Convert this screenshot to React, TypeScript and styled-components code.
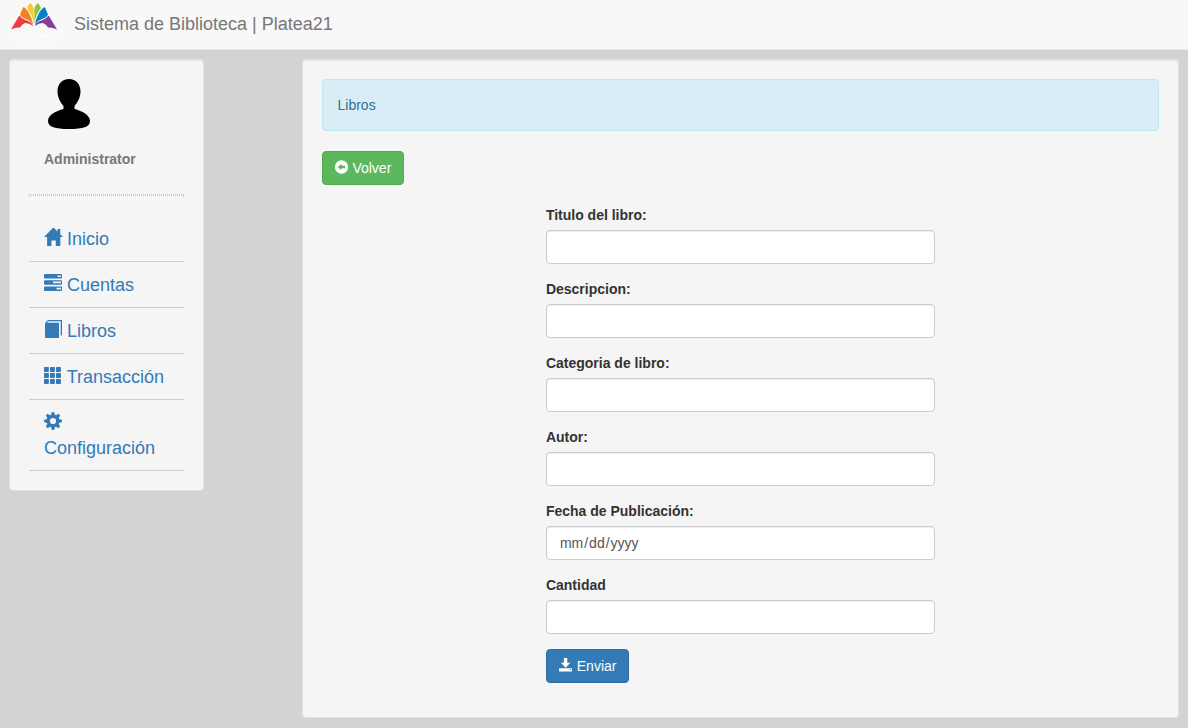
import React from "react";
import styled, { createGlobalStyle } from "styled-components";

const GlobalStyle = createGlobalStyle`
  *, *::before, *::after { box-sizing: border-box; }
  body {
    margin: 0;
    background: #d3d3d3;
    color: #333;
    font-family: "Liberation Sans", Arial, Helvetica, sans-serif;
    font-size: 14px;
    line-height: 20px;
  }
`;

const Navbar = styled.header`
  display: flex;
  align-items: flex-start;
  min-height: 50px;
  padding: 0 10px;
  background: #f8f8f8;
  border-bottom: 1px solid #e7e7e7;
`;

const Brand = styled.a`
  display: flex;
  align-items: center;
  gap: 16px;
  color: #777;
  font-size: 18px;
  text-decoration: none;
`;

const Logo = styled.svg`
  display: block;
  width: 48px;
  height: 48px;
`;

const Layout = styled.div`
  display: grid;
  grid-template-columns: minmax(0, 2fr) minmax(0, 9fr);
  column-gap: calc(100% / 12);
  align-items: start;
  padding: 9px 9px 10px;
`;

const Well = styled.div`
  padding: 19px;
  background: #f5f5f5;
  border: 1px solid #e3e3e3;
  border-radius: 4px;
  box-shadow: inset 0 1px 1px rgba(0, 0, 0, 0.05);
`;

const MainWell = styled(Well)`
  padding-bottom: 34px;
`;

const Profile = styled.div`
  padding: 0 15px;
  color: #777;
  font-weight: 700;
`;

const Avatar = styled.svg`
  display: block;
  width: 50px;
  height: 50px;
  margin-bottom: 20px;
`;

const Divider = styled.hr`
  height: 2px;
  margin: 25px 0 20px;
  border: 1px dotted #ccc;
`;

const Menu = styled.ul`
  margin: 0;
  padding: 0;
  list-style: none;
`;

const MenuItem = styled.li`
  border-bottom: 1px solid #ccc;
`;

const MenuLink = styled.a`
  display: block;
  padding: 11px 15px 9px;
  color: #337ab7;
  font-size: 18px;
  line-height: 25px;
  text-decoration: none;
`;

const Icon = styled.svg<{ $size: number }>`
  width: ${(p) => p.$size}px;
  height: ${(p) => p.$size}px;
  vertical-align: -1px;
  fill: currentColor;
  overflow: visible;
`;

const Alert = styled.div`
  margin-bottom: 20px;
  padding: 15px;
  background: #d9edf7;
  border: 1px solid #bce8f1;
  border-radius: 4px;
  color: #31708f;
`;

const Button = styled.button<{ $bg: string; $border: string }>`
  padding: 6px 12px;
  background: ${(p) => p.$bg};
  border: 1px solid ${(p) => p.$border};
  border-radius: 4px;
  color: #fff;
  font: inherit;
  white-space: nowrap;
  cursor: pointer;
`;

const Form = styled.form`
  width: 50%;
  margin: 20px auto 0;
  padding: 0 15px;
`;

const Field = styled.div`
  margin-bottom: 15px;
`;

const Label = styled.label`
  display: block;
  margin-bottom: 5px;
  font-weight: 700;
`;

const Input = styled.input`
  display: block;
  width: 100%;
  height: 34px;
  padding: 6px 12px;
  background: #fff;
  border: 1px solid #ccc;
  border-radius: 4px;
  box-shadow: inset 0 1px 1px rgba(0, 0, 0, 0.075);
  color: #555;
  font: inherit;

  &::-webkit-calendar-picker-indicator { display: none; }
`;

const HomeIcon = () => (
  <Icon $size={18} viewBox="0 0 18 18" aria-hidden="true">
    <path d="M8.900 0Q9.400-.6 10 0L13.500 3.500V1H16.300V6.300L19 9.100H16.300V17.400q0 .6-.6.6H11.800V12.500H7.400V18H3.700q-.6 0-.6-.6V9.100H0Z" />
  </Icon>
);

const TasksIcon = () => (
  <Icon $size={18} viewBox="0 0 18 18" aria-hidden="true">
    <path
      fillRule="evenodd"
      d="M1 0H17Q18 0 18 1V3.500Q18 4.500 17 4.500H1Q0 4.500 0 3.500V1Q0 0 1 0ZM13.500 1.400V3.100H17V1.400ZM1 6.200H17Q18 6.200 18 7.200V9.700Q18 10.700 17 10.700H1Q0 10.700 0 9.700V7.200Q0 6.200 1 6.200ZM9 7.600V9.300H17V7.600ZM1 12.400H17Q18 12.400 18 13.400V15.900Q18 16.900 17 16.900H1Q0 16.900 0 15.900V13.400Q0 12.400 1 12.400ZM12.500 13.800V15.500H17V13.800Z"
    />
  </Icon>
);

const BookIcon = () => (
  <Icon $size={18} viewBox="0 0 18 18" aria-hidden="true">
    <path d="M4 0H18V15L16.700 16V1.200H4.300L2.800 2.800H15V18H2Q1 18 1 17V3Z" />
  </Icon>
);

const GridIcon = () => (
  <Icon $size={18} viewBox="0 0 18 18" aria-hidden="true">
    {[0, 6, 12].map((y) =>
      [0, 6, 12].map((x) => <rect key={`${x}-${y}`} x={x} y={y + 1} width="4.900" height="4.900" rx=".7" />)
    )}
  </Icon>
);

const CogIcon = () => (
  <Icon $size={18} viewBox="0 0 18 18" aria-hidden="true">
    <path fillRule="evenodd" d="M9 2.500a6.500 6.500 0 1 0 0 13a6.500 6.500 0 1 0 0-13ZM9 5.900a3.100 3.100 0 1 1 0 6.200a3.100 3.100 0 1 1 0-6.200Z" />
    {[0, 45, 90, 135, 180, 225, 270, 315].map((a) => (
      <path key={a} transform={`rotate(${a} 9 9)`} d="M7 3.500L7.700.2Q9-.2 10.300.2L11 3.500Z" />
    ))}
  </Icon>
);

const BackIcon = () => (
  <Icon $size={14} viewBox="0 0 14 14" aria-hidden="true">
    <path fillRule="evenodd" d="M6.500 .3a6.700 6.700 0 1 0 0 13.400a6.700 6.700 0 1 0 0-13.400ZM2.700 7L6.500 3.800V5.800H10V8.200H6.500V10.200Z" />
  </Icon>
);

const SaveIcon = () => (
  <Icon $size={14} viewBox="0 0 14 14" aria-hidden="true">
    <path fillRule="evenodd" d="M4.900 0H8.300V4.700H11.300L6.700 9.700L1.900 4.700H4.900ZM.1 10.300H13V13.600H.1ZM10.900 11.200V12H12.200V11.200Z" />
  </Icon>
);

const BookLogo = () => (
  <Logo viewBox="0 0 48 48" aria-hidden="true">
    <path fill="#ee3a43" d="M1 29.500L9 16Q9.500 15.500 10 16Q12 19 18 21Q22 22.500 23.200 26Q19 23 15.500 23Q12.500 23.500 10 27.500Q6 27 1 29.500Z" />
    <path fill="#f58220" d="M10 14.500L13 7.500Q14 7 15 8Q20 12 23.200 24.500Q20.500 20.500 16 19Q11.500 17.500 10 14.500Z" />
    <path fill="#fdc82f" d="M17 8L19.500 3.500Q20 3 21 3.800Q23.600 6 23.700 9V23.500Q22 14 17 8Z" />
    <path fill="#8dc63f" d="M31 8L28.500 3.500Q28 3 27 3.800Q24.400 6 24.300 9V23.500Q26 14 31 8Z" />
    <path fill="#0081c6" d="M38 14.500L35 7.500Q34 7 33 8Q28 12 24.800 24.500Q27.500 20.500 32 19Q36.500 17.500 38 14.500Z" />
    <path fill="#7f3f98" d="M47 29.500L39 16Q38.500 15.500 38 16Q36 19 30 21Q26 22.500 24.800 26Q29 23 32.500 23Q35.500 23.500 38 27.500Q42 27 47 29.500Z" />
    <g fill="#fff" textAnchor="middle" fontFamily="Liberation Serif, serif">
      <text x="24" y="38" fontSize="6">MID-CONTINENT</text>
      <text x="24" y="45" fontSize="4">PUBLIC LIBRARY</text>
    </g>
  </Logo>
);

const menu = [
  { label: "Inicio", icon: HomeIcon },
  { label: "Cuentas", icon: TasksIcon },
  { label: "Libros", icon: BookIcon },
  { label: "Transacción", icon: GridIcon },
  { label: "Configuración", icon: CogIcon },
];

const fields = [
  { id: "titulo", label: "Titulo del libro:", type: "text" },
  { id: "descripcion", label: "Descripcion:", type: "text" },
  { id: "categoria", label: "Categoria de libro:", type: "text" },
  { id: "autor", label: "Autor:", type: "text" },
  { id: "fecha", label: "Fecha de Publicación:", type: "date" },
  { id: "cantidad", label: "Cantidad", type: "text" },
];

export default function App() {
  return (
    <>
      <GlobalStyle />
      <Navbar>
        <Brand href="#">
          <BookLogo />
          Sistema de Biblioteca | Platea21
        </Brand>
      </Navbar>
      <Layout>
        <Well as="aside">
          <Profile>
            <Avatar viewBox="0 0 50 50" aria-hidden="true">
              <path d="M25 0C32 0 36.500 5 36.500 12.500C36.500 19 33 24 30.500 27V30C38 32 46 36 46 42C46 48 39 50 25 50C11 50 4 48 4 42C4 36 12 32 19.500 30V27C17 24 13.500 19 13.500 12.500C13.500 5 18 0 25 0Z" />
            </Avatar>
            Administrator
          </Profile>
          <Divider />
          <nav>
            <Menu>
              {menu.map(({ label, icon: ItemIcon }) => (
                <MenuItem key={label}>
                  <MenuLink href="#">
                    <ItemIcon /> {label}
                  </MenuLink>
                </MenuItem>
              ))}
            </Menu>
          </nav>
        </Well>
        <MainWell as="main">
          <Alert>Libros</Alert>
          <Button type="button" $bg="#5cb85c" $border="#4cae4c">
            <BackIcon /> Volver
          </Button>
          <Form>
            {fields.map((f) => (
              <Field key={f.id}>
                <Label htmlFor={f.id}>{f.label}</Label>
                <Input id={f.id} type={f.type} />
              </Field>
            ))}
            <Button type="submit" $bg="#337ab7" $border="#2e6da4">
              <SaveIcon /> Enviar
            </Button>
          </Form>
        </MainWell>
      </Layout>
    </>
  );
}
